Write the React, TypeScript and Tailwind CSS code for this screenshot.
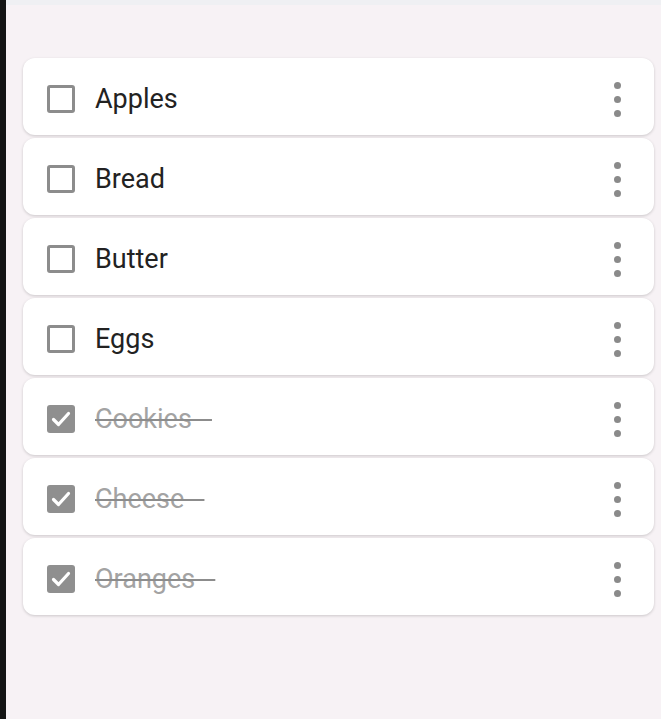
import { useState } from 'react'

type Item = { id: number; name: string; done: boolean }

const initial: Item[] = [
  { id: 1, name: 'Apples', done: false },
  { id: 2, name: 'Bread', done: false },
  { id: 3, name: 'Butter', done: false },
  { id: 4, name: 'Eggs', done: false },
  { id: 5, name: 'Cookies', done: true },
  { id: 6, name: 'Cheese', done: true },
  { id: 7, name: 'Oranges', done: true },
]

export default function App() {
  const [items, setItems] = useState(initial)

  const toggle = (id: number) =>
    setItems((prev) => prev.map((it) => (it.id === id ? { ...it, done: !it.done } : it)))

  return (
    <div className="flex h-[719px] w-[661px] overflow-hidden bg-[#f7f2f5] font-['Roboto',sans-serif]">
      <div className="w-[6px] shrink-0 bg-[#141414]" />
      <div className="flex flex-1 flex-col">
        <div className="h-[5px] bg-[#eff0f3]" />
        <ul className="flex flex-col gap-[3px] pl-[17px] pr-[7px] pt-[53px]">
          {items.map((it) => (
            <Row key={it.id} item={it} onToggle={() => toggle(it.id)} />
          ))}
        </ul>
      </div>
    </div>
  )
}

function Row({ item, onToggle }: { item: Item; onToggle: () => void }) {
  return (
    <li className="flex h-[77px] items-center rounded-[12px] bg-white pl-[24px] pr-[33px] pt-[5px] shadow-[0_1px_3px_rgba(0,0,0,0.18)]">
      <button onClick={onToggle} className="shrink-0">
        {item.done ? (
          <span className="flex h-[28px] w-[28px] items-center justify-center rounded-[3px] bg-[#8f8f8f]">
            <svg viewBox="0 0 28 28" className="h-[28px] w-[28px]" fill="none" stroke="white" strokeWidth="3.2" strokeLinecap="round" strokeLinejoin="round">
              <path d="M6.5 14.5l5 5L21.5 8.5" />
            </svg>
          </span>
        ) : (
          <span className="block h-[28px] w-[28px] rounded-[3px] border-[3px] border-[#8c8c8c]" />
        )}
      </button>
      <span
        className={
          item.done
            ? 'ml-[20px] flex-1 text-[27px] text-[#a3a3a3] line-through decoration-[#8c8c8c] decoration-[2px]'
            : 'ml-[20px] flex-1 text-[27px] text-[#222222]'
        }
      >
        {item.done ? item.name + '\u00a0\u00a0\u00a0' : item.name}
      </span>
      <span className="flex flex-col gap-[7px]">
        <span className="h-[7px] w-[7px] rounded-full bg-[#8a8a8a]" />
        <span className="h-[7px] w-[7px] rounded-full bg-[#8a8a8a]" />
        <span className="h-[7px] w-[7px] rounded-full bg-[#8a8a8a]" />
      </span>
    </li>
  )
}
